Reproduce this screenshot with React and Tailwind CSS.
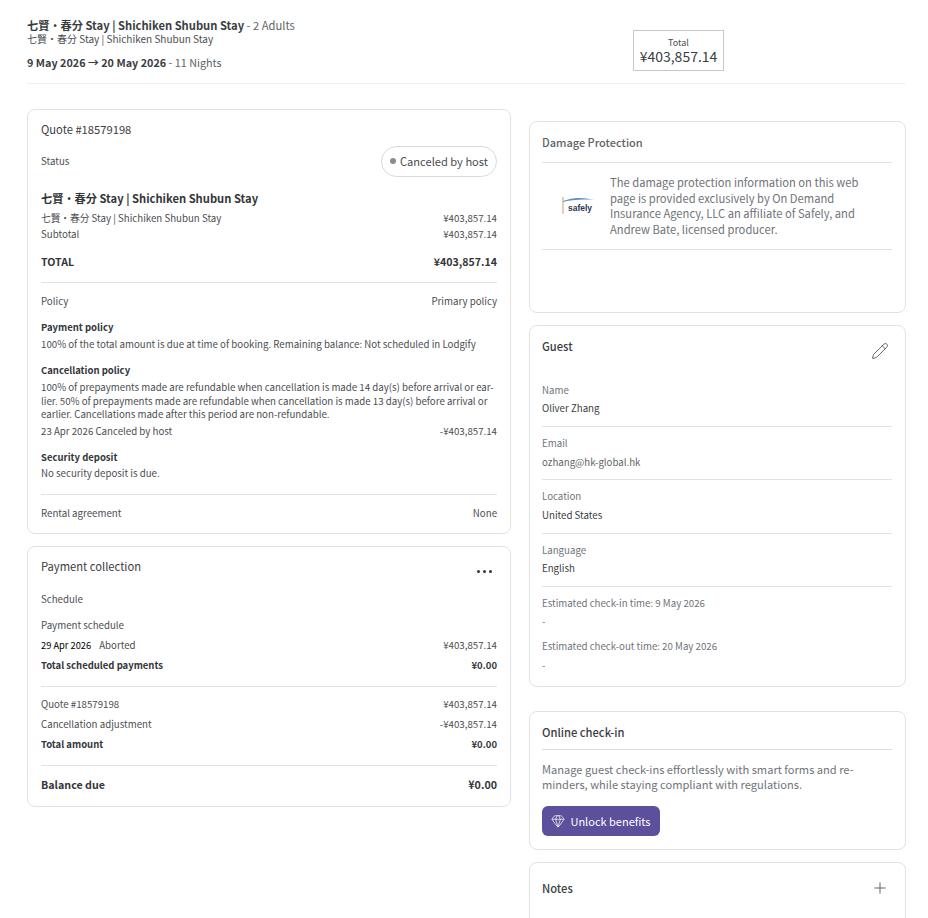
import { Gem, Pencil, Plus } from "lucide-react";

const font = { fontFamily: '"Noto Sans CJK JP", "Noto Sans", sans-serif' };

function Row({ left, right, className = "" }) {
	return (
		<div className={`flex justify-between items-center ${className}`}>
			<span>{left}</span>
			<span>{right}</span>
		</div>
	);
}

function Card({ className = "", children }) {
	return (
		<div className={`bg-white border border-[#e2e2e2] rounded-lg ${className}`}>
			{children}
		</div>
	);
}

function Divider({ className = "" }) {
	return <div className={`h-px bg-[#e2e2e2] ${className}`} />;
}

function SafelyLogo() {
	return (
		<svg width="36" height="20" viewBox="0 0 36 20" className="shrink-0">
			<rect x="1.5" y="1" width="1" height="17" fill="#c9a06a" />
			<path d="M0 6 C10 1 22 1 33 4 C22 3 10 4 0 6 Z" fill="#5b8fc7" />
			<text x="7" y="14.5" fontSize="8.5" fontWeight="700" fill="#2b3550" fontFamily="Liberation Sans, sans-serif">
				safely
			</text>
		</svg>
	);
}

function GuestField({ label, value, className = "h-[53px]", valueClass = "mt-[3px] text-[#3a3d42]" }) {
	return (
		<div className={`border-b border-[#e2e2e2] pt-[8px] ${className}`}>
			<div className="text-[#6f737a] leading-[16px]">{label}</div>
			<div className={`leading-[16px] ${valueClass}`}>{value}</div>
		</div>
	);
}

function QuoteCard() {
	return (
		<Card className="h-[425px] px-[13px] text-[9.7px] text-[#4a4d52]">
			<div className="pt-[10px] text-[11.2px] leading-[18px] text-[#3a3d42]">Quote #18579198</div>
			<div className="mt-[8px] flex justify-between items-center h-[30px]">
				<span>Status</span>
				<span className="h-[31px] w-[116px] border border-[#d9d9d9] rounded-full flex items-center justify-center gap-[4px] text-[11.1px] text-[#4a4d52]">
					<span className="w-[6px] h-[6px] rounded-full bg-[#8c8c8c]" />
					Canceled by host
				</span>
			</div>
			<div className="mt-[13px] text-[11.2px] font-bold leading-[18px] text-[#33363a]">
				七賢・春分 Stay | Shichiken Shubun Stay
			</div>
			<Row className="mt-[3px] h-[16px]" left="七賢・春分 Stay | Shichiken Shubun Stay" right="¥403,857.14" />
			<Row className="h-[16px]" left="Subtotal" right="¥403,857.14" />
			<Row className="mt-[12px] h-[16px] font-bold text-[#33363a] text-[10.6px]" left="TOTAL" right="¥403,857.14" />
			<Divider className="mt-[12px]" />
			<Row className="mt-[10px] h-[16px]" left="Policy" right="Primary policy" />
			<div className="mt-[10px] text-[9.5px] font-bold leading-[16px] text-[#33363a]">Payment policy</div>
			<div className="mt-px leading-[16px]">
				100% of the total amount is due at time of booking. Remaining balance: Not scheduled in Lodgify
			</div>
			<div className="mt-[10px] text-[9.5px] font-bold leading-[16px] text-[#33363a]">Cancellation policy</div>
			<div className="leading-[13.5px] mt-[3px] whitespace-nowrap">
				100% of prepayments made are refundable when cancellation is made 14 day(s) before arrival or ear-
				<br />
				lier. 50% of prepayments made are refundable when cancellation is made 13 day(s) before arrival or
				<br />
				earlier. Cancellations made after this period are non-refundable.
			</div>
			<Row className="h-[16px] mt-[2px]" left="23 Apr 2026 Canceled by host" right="-¥403,857.14" />
			<div className="mt-[9px] text-[9.5px] font-bold leading-[16px] text-[#33363a]">Security deposit</div>
			<div className="leading-[16px]">No security deposit is due.</div>
			<Divider className="mt-[13px]" />
			<Row className="mt-[11px] h-[16px]" left="Rental agreement" right="None" />
		</Card>
	);
}

function PaymentCard() {
	return (
		<Card className="mt-[12px] h-[261px] px-[13px] text-[9.7px] text-[#4a4d52]">
			<div className="flex justify-between">
				<div className="pt-[10px] text-[11.2px] leading-[18px] text-[#3a3d42]">Payment collection</div>
				<div className="flex gap-[3px] pt-[23px] pr-[5px]">
					<span className="w-[3px] h-[3px] rounded-full bg-[#33363a]" />
					<span className="w-[3px] h-[3px] rounded-full bg-[#33363a]" />
					<span className="w-[3px] h-[3px] rounded-full bg-[#33363a]" />
				</div>
			</div>
			<div className="mt-[16px] leading-[16px]">Schedule</div>
			<div className="mt-[10px] leading-[16px]">Payment schedule</div>
			<div className="mt-[4px] h-[16px] flex justify-between items-center">
				<span>
					<span className="text-[9.3px] text-black mr-[8px]">29 Apr 2026</span>Aborted
				</span>
				<span>¥403,857.14</span>
			</div>
			<Row className="mt-[4px] h-[16px] font-bold text-[9.5px] text-[#33363a]" left="Total scheduled payments" right="¥0.00" />
			<Divider className="mt-[13px]" />
			<Row className="mt-[9px] h-[16px]" left="Quote #18579198" right="¥403,857.14" />
			<Row className="mt-[4px] h-[16px]" left="Cancellation adjustment" right="-¥403,857.14" />
			<Row className="mt-[4px] h-[16px] font-bold text-[9.5px] text-[#33363a]" left="Total amount" right="¥0.00" />
			<Divider className="mt-[13px]" />
			<Row className="mt-[10px] h-[18px] font-bold text-[10.7px] text-[#33363a]" left="Balance due" right="¥0.00" />
		</Card>
	);
}

function DamageCard() {
	return (
		<Card className="h-[192px] pl-[12px] pr-[13px]">
			<div className="h-[41px] pt-[11px] text-[11px] leading-[18px] text-[#5f6368] border-b border-[#e2e2e2] font-medium">
				Damage Protection
			</div>
			<div className="h-[87px] border-b border-[#e2e2e2] flex items-center pl-[19px] gap-[13px]">
				<SafelyLogo />
				<p className="text-[11.2px] leading-[15.5px] text-[#6f737a] w-[262px]">
					The damage protection information on this web page is provided exclusively by On Demand Insurance
					Agency, LLC an affiliate of Safely, and Andrew Bate, licensed producer.
				</p>
			</div>
		</Card>
	);
}

function GuestCard() {
	return (
		<Card className="mt-[12px] h-[362px] pl-[12px] pr-[13px] text-[9.7px]">
			<div className="flex justify-between h-[48px]">
				<div className="pt-[11px] text-[11.2px] font-medium leading-[18px] text-[#3a3d42]">Guest</div>
				<Pencil size={18} strokeWidth={1} className="mt-[16px] mr-[3px] text-[#33363a]" />
			</div>
			<GuestField label="Name" value="Oliver Zhang" valueClass="mt-[2px] text-[#3a3d42]" />
			<GuestField label="Email" value="ozhang@hk-global.hk" valueClass="mt-[3px] text-[#5f6368]" />
			<GuestField label="Location" value="United States" className="h-[54px]" />
			<GuestField label="Language" value="English" valueClass="mt-[2px] text-[#3a3d42]" />
			<div className="pt-[8px] text-[#6f737a] leading-[16px]">
				<div>Estimated check-in time: 9 May 2026</div>
				<div className="mt-[2px]">-</div>
				<div className="mt-[9px]">Estimated check-out time: 20 May 2026</div>
				<div className="mt-[3px]">-</div>
			</div>
		</Card>
	);
}

function CheckinCard() {
	return (
		<Card className="mt-[24px] h-[139px] pl-[12px] pr-[13px]">
			<div className="h-[38px] pt-[11px] text-[11.2px] font-medium leading-[18px] text-[#3a3d42] border-b border-[#dcdcdc]">
				Online check-in
			</div>
			<p className="mt-[12px] text-[11.1px] leading-[15px] text-[#6f737a]">
				Manage guest check-ins effortlessly with smart forms and re-
				<br />
				minders, while staying compliant with regulations.
			</p>
			<button className="mt-[14px] h-[30px] w-[118px] rounded-md bg-[#5c4f9b] text-white text-[11px] flex items-center justify-center gap-[5px]">
				<Gem size={14} strokeWidth={1.25} />
				Unlock benefits
			</button>
		</Card>
	);
}

function NotesCard() {
	return (
		<Card className="mt-[12px] h-[80px] pl-[12px] pr-[13px]">
			<div className="flex justify-between items-center h-[50px]">
				<span className="text-[11.2px] font-medium text-[#3a3d42]">Notes</span>
				<Plus size={18} strokeWidth={1} className="mr-[3px] text-[#33363a]" />
			</div>
		</Card>
	);
}

export default function App() {
	return (
		<div style={font} className="h-[918px] overflow-hidden bg-white pl-[27px] pr-[22px]">
			<header className="h-[84px] border-b border-[#f0f0f0] flex">
				<div className="w-[606px] pt-[17px]">
					<div className="text-[11.2px] leading-[16px] text-[#3a3d42]">
						<span className="font-bold">七賢・春分 Stay | Shichiken Shubun Stay</span>
						<span className="text-[#5f6368]"> - 2 Adults</span>
					</div>
					<div className="text-[10px] leading-[12px] text-[#4a4d52]">七賢・春分 Stay | Shichiken Shubun Stay</div>
					<div className="mt-[9px] text-[10.8px] leading-[16px] text-[#3a3d42]">
						<span className="font-bold">9 May 2026 → 20 May 2026</span>
						<span className="text-[#5f6368]"> - 11 Nights</span>
					</div>
				</div>
				<div className="mt-[30px] h-[41px] w-[91px] border border-[#c8c8c8] flex flex-col items-center justify-center">
					<span className="text-[9px] leading-[11px] text-[#4a4d52]">Total</span>
					<span className="text-[14px] leading-[17px] text-[#3a3d42]">¥403,857.14</span>
				</div>
			</header>
			<div className="flex gap-[18px]">
				<div className="w-[484px] pt-[25px]">
					<QuoteCard />
					<PaymentCard />
				</div>
				<div className="w-[377px] pt-[37px]">
					<DamageCard />
					<GuestCard />
					<CheckinCard />
					<NotesCard />
				</div>
			</div>
		</div>
	);
}
